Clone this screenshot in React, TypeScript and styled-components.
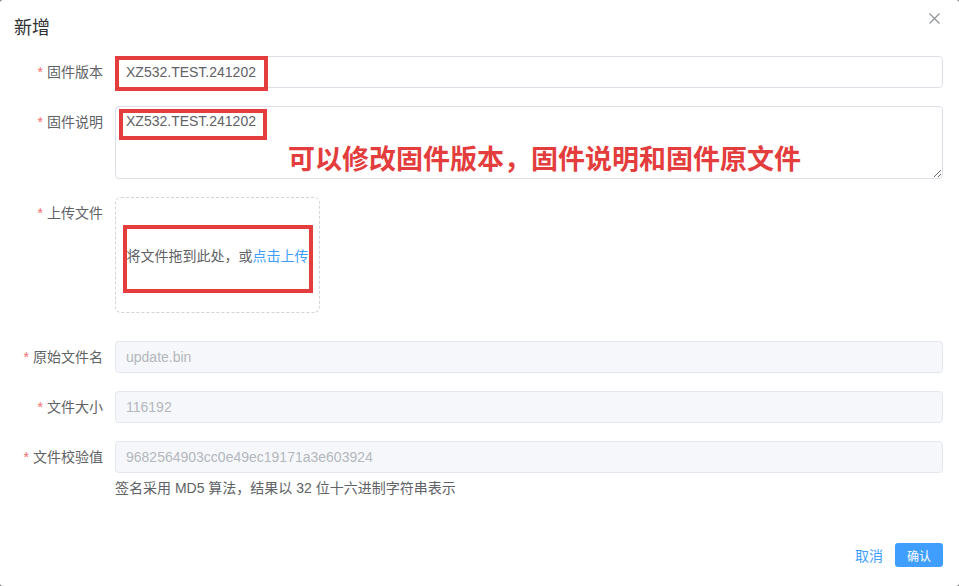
import React from "react";
import styled, {createGlobalStyle} from "styled-components";

const GlobalStyle = createGlobalStyle`
  html, body {
    margin: 0;
    padding: 0;
    background: #7a7a7a;
  }

  body {
    font-family: "Liberation Sans", "Noto Sans CJK SC", sans-serif;
  }
`;

const Dialog = styled.div`
  width: 959px;
  height: 586px;
  box-sizing: border-box;
  background: #fff;
  border-radius: 3px;
  display: flex;
  flex-direction: column;
`;

const Header = styled.div`
  height: 40px;
  padding: 16px 16px 0 14px;
  box-sizing: border-box;
  display: flex;
  justify-content: space-between;
  align-items: center;
`;

const Title = styled.span`
  font-size: 18px;
  line-height: 24px;
  color: #303133;
`;

const CloseButton = styled.button`
  border: none;
  background: none;
  padding: 0;
  width: 12px;
  height: 12px;
  margin-right: 3px;
  margin-top: -20px;
  display: flex;
  align-items: center;
  justify-content: center;
  cursor: pointer;
`;

const Body = styled.div`
  flex: 1;
  padding: 16px 16px 0 15px;
  display: flex;
  flex-direction: column;
  gap: 18px;
`;

const FormItem = styled.div`
  display: flex;
  align-items: flex-start;
`;

const Label = styled.label`
  width: 100px;
  flex: none;
  box-sizing: border-box;
  padding-right: 12px;
  text-align: right;
  font-size: 14px;
  line-height: 32px;
  color: #606266;

  &::before {
    content: "*";
    color: #f56c6c;
    margin-right: 4px;
  }
`;

const Control = styled.div`
  position: relative;
  flex: 1;
  min-width: 0;
  display: flex;
  flex-direction: column;
`;

const Input = styled.input`
  height: 32px;
  box-sizing: border-box;
  border: 1px solid #dcdfe6;
  border-radius: 4px;
  padding: 0 10px;
  font-family: inherit;
  font-size: 14px;
  color: #606266;
  background: #fff;
  outline: none;

  &:disabled {
    background: #f5f7fa;
    border-color: #e4e7ed;
    color: #b4b7bd;
  }
`;

const TextArea = styled.textarea`
  height: 73px;
  box-sizing: border-box;
  border: 1px solid #dcdfe6;
  border-radius: 4px;
  padding: 4px 10px;
  font-family: inherit;
  font-size: 14px;
  line-height: 21px;
  color: #606266;
  outline: none;
  resize: vertical;
`;

const Dragger = styled.div`
  width: 205px;
  height: 116px;
  box-sizing: border-box;
  border: 1px dashed #d0d3d9;
  border-radius: 6px;
  display: flex;
  align-items: center;
  justify-content: center;
  font-size: 14px;
  color: #606266;
  white-space: nowrap;
  margin-bottom: 10px;

  em {
    font-style: normal;
    color: #409eff;
  }
`;

const Tip = styled.div`
  font-size: 14px;
  line-height: 20px;
  color: #606266;
  margin-top: 5px;
`;

const Footer = styled.div`
  padding: 0 16px 19px;
  display: flex;
  justify-content: flex-end;
  align-items: center;
  gap: 12px;
`;

const TextButton = styled.button`
  border: none;
  background: none;
  padding: 0;
  font-family: inherit;
  font-size: 14px;
  color: #409eff;
  cursor: pointer;
`;

const PrimaryButton = styled.button`
  width: 48px;
  height: 24px;
  border: none;
  border-radius: 3px;
  background: #409eff;
  color: #fff;
  font-family: inherit;
  font-size: 12px;
  cursor: pointer;
`;

// red annotation frames drawn over the form
const Mark = styled.div<{ $left: number; $top: number; $w: number; $h: number }>`
  position: absolute;
  left: ${p => p.$left}px;
  top: ${p => p.$top}px;
  width: ${p => p.$w}px;
  height: ${p => p.$h}px;
  box-sizing: border-box;
  border: 4px solid #e33d3d;
  pointer-events: none;
`;

const Note = styled.div`
  position: absolute;
  left: 173px;
  top: 37px;
  font-size: 27px;
  line-height: 30px;
  font-weight: bold;
  color: #e33d3d;
  font-family: "Noto Sans CJK SC", sans-serif;
  white-space: nowrap;
  pointer-events: none;
`;

function CloseIcon() {
    return (
        <svg width="11" height="11" viewBox="0 0 11 11">
            <path d="M0.5 0.5L10.5 10.5M10.5 0.5L0.5 10.5" stroke="#909399" strokeWidth="1.2"/>
        </svg>
    );
}

const App = () => {
    return (
        <>
            <GlobalStyle/>
            <Dialog>
                <Header>
                    <Title>新增</Title>
                    <CloseButton aria-label="close"><CloseIcon/></CloseButton>
                </Header>
                <Body>
                    <FormItem>
                        <Label>固件版本</Label>
                        <Control>
                            <Input defaultValue="XZ532.TEST.241202"/>
                            <Mark $left={0} $top={0} $w={153} $h={35}/>
                        </Control>
                    </FormItem>
                    <FormItem>
                        <Label>固件说明</Label>
                        <Control>
                            <TextArea defaultValue="XZ532.TEST.241202"/>
                            <Mark $left={4} $top={3} $w={148} $h={31}/>
                            <Note>可以修改固件版本，固件说明和固件原文件</Note>
                        </Control>
                    </FormItem>
                    <FormItem>
                        <Label>上传文件</Label>
                        <Control>
                            <Dragger>将文件拖到此处，或<em>点击上传</em></Dragger>
                            <Mark $left={8} $top={28} $w={190} $h={68}/>
                        </Control>
                    </FormItem>
                    <FormItem>
                        <Label>原始文件名</Label>
                        <Control>
                            <Input disabled value="update.bin"/>
                        </Control>
                    </FormItem>
                    <FormItem>
                        <Label>文件大小</Label>
                        <Control>
                            <Input disabled value="116192"/>
                        </Control>
                    </FormItem>
                    <FormItem>
                        <Label>文件校验值</Label>
                        <Control>
                            <Input disabled value="9682564903cc0e49ec19171a3e603924"/>
                            <Tip>签名采用 MD5 算法，结果以 32 位十六进制字符串表示</Tip>
                        </Control>
                    </FormItem>
                </Body>
                <Footer>
                    <TextButton>取消</TextButton>
                    <PrimaryButton>确认</PrimaryButton>
                </Footer>
            </Dialog>
        </>
    );
};

export default App;
